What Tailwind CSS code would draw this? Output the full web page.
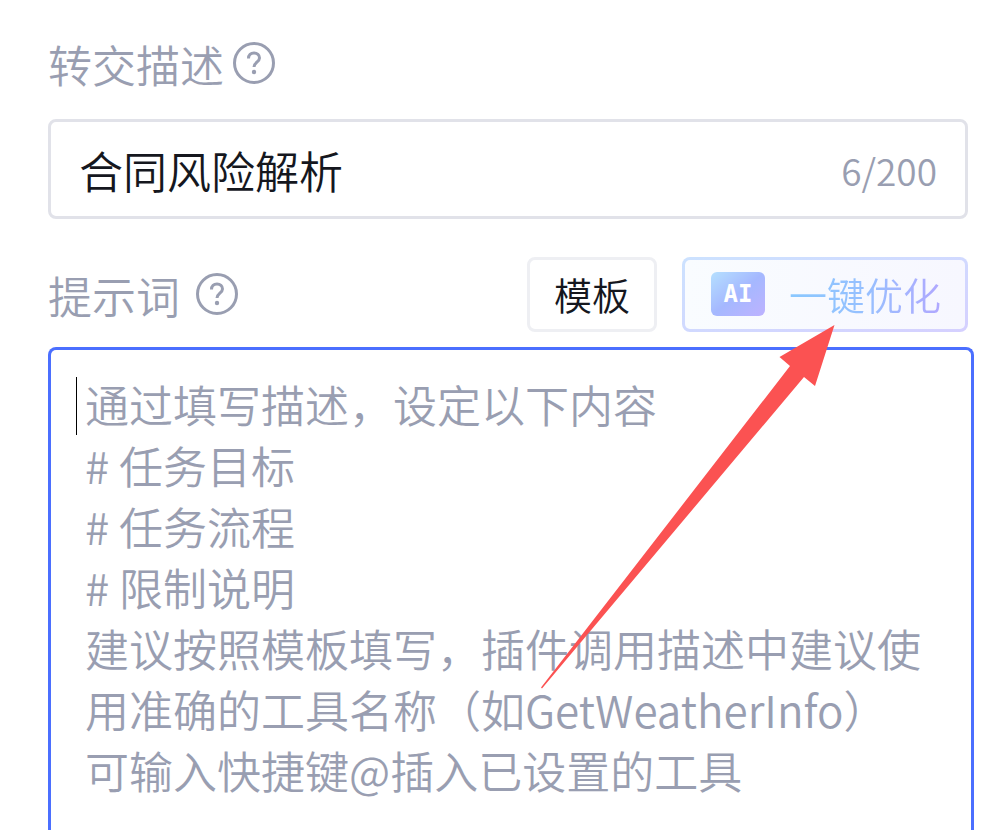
<!DOCTYPE html>
<html lang="zh-CN">
<head>
    <meta charset="UTF-8">
    <meta name="viewport" content="width=device-width, initial-scale=1.0">
    <title>提示词</title>
    <script src="https://cdn.jsdelivr.net/npm/@tailwindcss/browser@4"></script>
</head>
<body class="bg-white font-['Noto_Sans_CJK_SC',sans-serif] font-[350]">

    <form class="relative flex flex-col min-h-screen overflow-hidden pt-[34px] pl-12 pr-8">
        <!-- Description -->
        <div class="flex items-center gap-[9px] h-[60px] text-[#999eb1]">
            <label for="description" class="text-[44px] leading-[60px]">转交描述</label>
            <svg class="w-[42px] h-[42px] mb-[2px]" viewBox="0 0 42 42" fill="none" stroke="currentColor" stroke-width="3">
                <circle cx="21" cy="21" r="19.5"/>
                <path d="M15.500 16.500c0-3.500 2.300-5.500 5.500-5.500s5.500 2 5.500 5c0 4-5.500 4.500-5.500 9"/>
                <circle cx="21" cy="30" r="2.200" fill="currentColor" stroke="none"/>
            </svg>
        </div>

        <div class="flex items-center h-[100px] mt-[25px] mr-[6px] px-7 pt-0.5 border-3 border-[#e1e2e9] rounded-lg">
            <input type="text" id="description" value="合同风险解析" maxlength="200" class="flex-1 min-w-0 text-[44px] leading-[60px] text-[#15171e] outline-none">
            <span class="text-[37px] leading-[48px] text-[#999eb1]">6/200</span>
        </div>

        <!-- Prompt -->
        <div class="flex items-center mt-[38px] mr-[6px] h-[75px]">
            <div class="flex items-center gap-4 text-[#999eb1]">
                <label for="prompt" class="text-[44px] leading-[60px]">提示词</label>
                <svg class="w-[42px] h-[42px] mb-[2px]" viewBox="0 0 42 42" fill="none" stroke="currentColor" stroke-width="3">
                    <circle cx="21" cy="21" r="19.5"/>
                    <path d="M15.500 16.500c0-3.500 2.300-5.500 5.500-5.500s5.500 2 5.500 5c0 4-5.500 4.500-5.500 9"/>
                    <circle cx="21" cy="30" r="2.200" fill="currentColor" stroke="none"/>
                </svg>
            </div>
            <button type="button" class="ml-auto h-full px-6 pb-0.5 border-3 border-[#eeeff3] rounded-lg text-[38px] leading-[48px] text-[#15171e]">模板</button>
            <button type="button" class="ml-[25px] h-full p-[3px] rounded-lg bg-linear-to-br from-[#cce2ff] to-[#d5d0ff]">
                <span class="flex items-center h-full pl-[26px] pr-6 pb-0.5 rounded-[5px] bg-linear-to-r from-[#f9fcff] to-[#f7f7ff]">
                    <span class="flex items-center justify-center w-[54px] h-11 mr-6 rounded-md bg-linear-to-br from-[#b5e0ff] via-[#a5b8ff] to-[#bdb2ff] font-['DejaVu_Sans_Mono',monospace] font-bold text-2xl text-white">AI</span>
                    <span class="text-[38px] leading-[48px] text-transparent bg-clip-text bg-linear-to-r from-[#8ac8ff] via-[#96c0ff] to-[#b0a8ff]">一键优化</span>
                </span>
            </button>
        </div>

        <div class="relative flex flex-col flex-1 mt-[15px]">
            <textarea id="prompt" class="flex-1 w-full min-h-[483px] pl-[34px] pr-6 pt-6 border-3 border-b-0 border-[#4b6fff] rounded-t-lg outline-none resize-none caret-transparent text-[44px] leading-[61px] placeholder:text-[#999eb1]"
                placeholder="通过填写描述，设定以下内容&#10;# 任务目标&#10;# 任务流程&#10;# 限制说明&#10;建议按照模板填写，插件调用描述中建议使用准确的工具名称（如GetWeatherInfo）&#10;可输入快捷键@插入已设置的工具"></textarea>
            <span class="absolute left-7 top-[30px] w-px h-[58px] bg-black"></span>
        </div>

        <!-- Arrow pointing at the optimize button -->
        <svg class="absolute right-[171px] top-[325px] w-[294px] h-[364px] pointer-events-none" viewBox="0 0 294 364" fill="#fb5252">
            <path d="M293.500 0L238.500 32l10.500 9L0 362.500l1 1L263 52l11 9z"/>
        </svg>
    </form>

</body>
</html>
